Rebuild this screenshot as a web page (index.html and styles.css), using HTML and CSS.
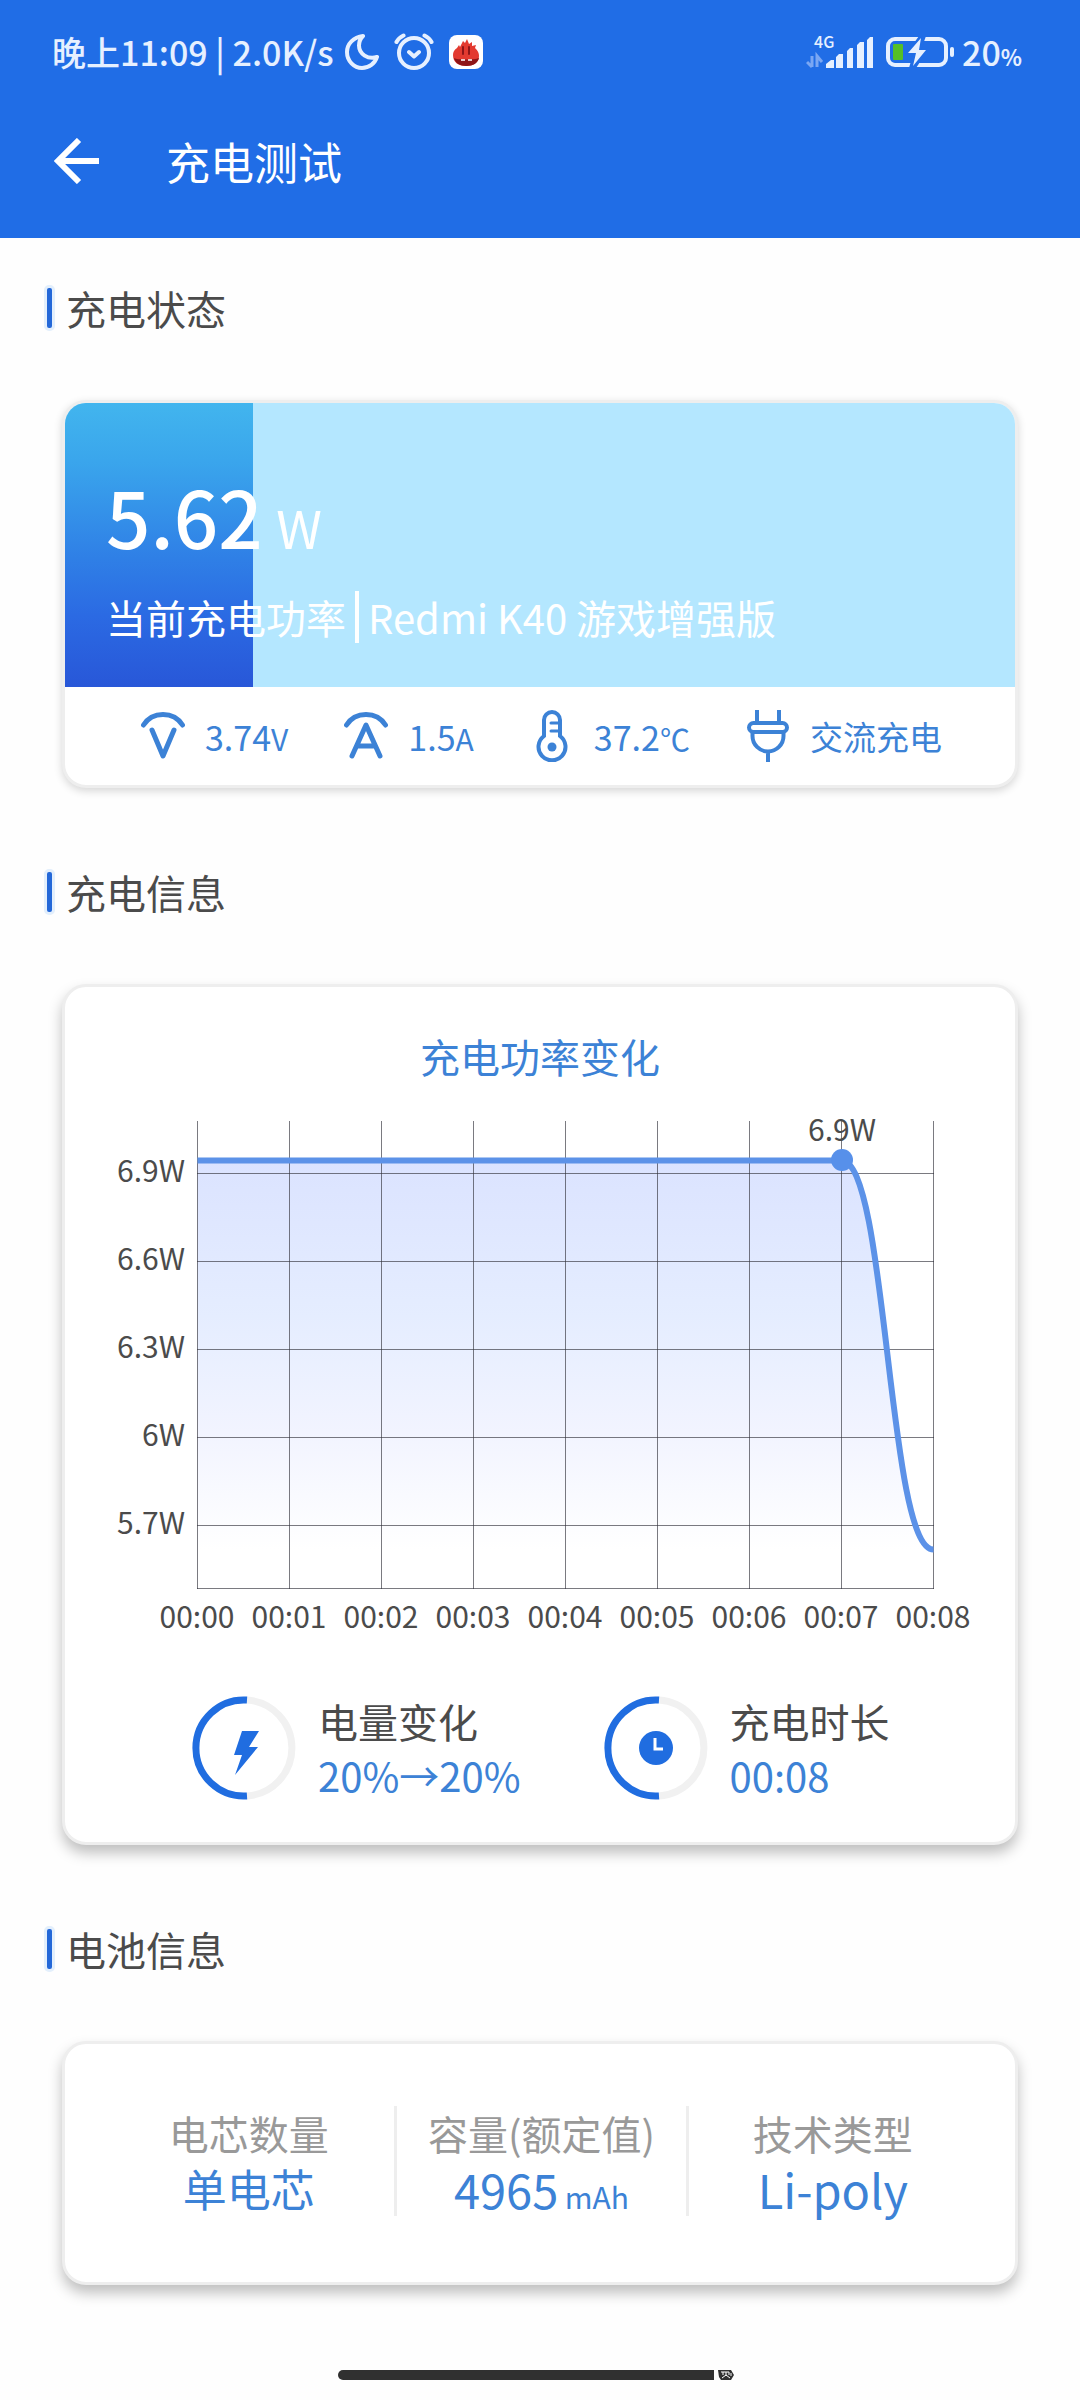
FILE: index.html
```html
<!DOCTYPE html>
<html lang="zh-CN">
<head>
    <meta charset="UTF-8">
    <meta name="viewport" content="width=device-width, initial-scale=1.0">
    <title>充电测试</title>
    <link rel="stylesheet" href="styles.css">
</head>
<body>
    <header class="app-header">
        <div class="status-bar">
            <div class="status-left">
                <span>晚上11:09 | 2.0K/s</span>
                <svg class="moon-icon" width="34" height="36" viewBox="0 0 34 36" fill="none" stroke="#e6f0ff" stroke-width="4" stroke-linejoin="round">
                    <path d="M18 2C8.500 3 2 10 2 18c0 9 7 16 15 16 7 0 13-4.500 15-11-9 3-18-3-18-11.500 0-3.500 1.500-7 4-9.500z"/>
                </svg>
                <svg class="alarm-icon" width="40" height="38" viewBox="0 0 40 38" fill="none" stroke="#e6f0ff" stroke-width="4" stroke-linecap="round" stroke-linejoin="round">
                    <circle cx="20" cy="20" r="15"/>
                    <path d="M2.500 9c1.500-3 4-5 7-6.500M37.500 9c-1.500-3-4-5-7-6.500M15 19l5 4.500 5-4.500"/>
                </svg>
                <svg width="34" height="34" viewBox="0 0 34 34">
                    <rect width="34" height="34" rx="8" fill="#fff"/>
                    <path d="M8 13l2-3 1 2 3-6 2 2 2-4 2 5 3-2 0 4 4-1-1 3c3 3 4 5 4 8 0 6-5 10-13 10S4 27 4 20c0-3 1-5 4-7z" fill="#e33a30"/>
                    <path d="M5 23c3 2 21 2 25 0-1 5-6 8-12.500 8S6 28 5 23z" fill="#8d1518"/>
                    <path d="M14 12v7M20 12v7" stroke="#8d1518" stroke-width="2" stroke-linecap="round"/>
                    <path d="M12 25h4M19 25h4" stroke="#fff" stroke-width="1.500"/>
                </svg>
            </div>
            <div class="status-right">
                <div class="signal">
                    <span class="network">4G</span>
                    <svg width="68" height="34" viewBox="0 0 68 34" fill="#e6f0ff">
                        <path d="M6 21v11M1 27l5 5M11 32V21l5 6" fill="none" stroke="#7aa7f3" stroke-width="3"/>
                        <path d="M20 33v-4l5-4h3v8zM30 33V22l3-3h4v14zM41 33V16l3-3h3v20zM51 33V10l3-3h4v26zM61 33V5l3-3h3v31z"/>
                    </svg>
                </div>
                <svg class="battery-icon" width="68" height="32" viewBox="0 0 68 32">
                    <rect x="2" y="3" width="58" height="26" rx="7" fill="none" stroke="#e6f0ff" stroke-width="4"/>
                    <rect x="7" y="8" width="10" height="16" rx="1" fill="#55bf27"/>
                    <rect x="64" y="11" width="4" height="10" rx="2" fill="#e6f0ff"/>
                    <path d="M33 0L20 18h7l-4 14h7l12-18h-7l5-14z" fill="#206de6"/>
                    <path d="M35 2L22 17h8l-3 13 13-16h-7z" fill="#e6f0ff"/>
                </svg>
                <span>20<small>%</small></span>
            </div>
        </div>
        <nav class="title-bar">
            <button class="back-btn" type="button" aria-label="返回">
                <svg width="46" height="46" viewBox="0 0 46 46" fill="none" stroke="#fff" stroke-width="6">
                    <path d="M25 2L4 23l21 21M4 23h41"/>
                </svg>
            </button>
            <h1>充电测试</h1>
        </nav>
    </header>

    <main>
        <section>
            <h2>充电状态</h2>
            <div class="card power-card">
                <div class="power">
                    <div class="power-value">5.62 <span>W</span></div>
                    <div class="power-info">
                        <span>当前充电功率</span>
                        <span class="device">Redmi K40 游戏增强版</span>
                    </div>
                </div>
                <ul class="metrics">
                    <li>
                        <svg width="44" height="52" viewBox="0 0 44 52" fill="none" stroke="#3c82d6" stroke-width="5" stroke-linecap="round" stroke-linejoin="round">
                            <path d="M2.500 15C7 8 14 4.500 22 4.500S37 8 41.500 15M11 20l11 26 11-26"/>
                        </svg>
                        <span>3.74<small>V</small></span>
                    </li>
                    <li>
                        <svg width="44" height="52" viewBox="0 0 44 52" fill="none" stroke="#3c82d6" stroke-width="5" stroke-linecap="round" stroke-linejoin="round">
                            <path d="M2.500 15C7 8 14 4.500 22 4.500S37 8 41.500 15M8 46l14-31 14 31M14 36h16"/>
                        </svg>
                        <span>1.5<small>A</small></span>
                    </li>
                    <li>
                        <svg width="44" height="52" viewBox="0 0 44 52" fill="none" stroke="#3c82d6" stroke-width="4" stroke-linecap="round">
                            <path d="M14 26V10a8 8 0 0 1 16 0v16a13.500 13.500 0 1 1-16 0z"/>
                            <path d="M21 13h8M21 21h8" stroke-width="3"/>
                            <circle cx="22" cy="37" r="4.500" fill="#3c82d6" stroke="none"/>
                        </svg>
                        <span>37.2<small>℃</small></span>
                    </li>
                    <li>
                        <svg width="44" height="52" viewBox="0 0 44 52" fill="none" stroke="#3c82d6" stroke-width="4">
                            <path d="M11 0v12M33 0v12M6.500 23v3a15.500 15.500 0 0 0 31 0v-3M22 41v11"/>
                            <rect x="3" y="13" width="38" height="9" rx="4.500"/>
                        </svg>
                        <span class="charge-type">交流充电</span>
                    </li>
                </ul>
            </div>
        </section>

        <section>
            <h2>充电信息</h2>
            <div class="card chart-card">
                <h3>充电功率变化</h3>
                <svg class="chart" viewBox="0 0 950 560" role="img" aria-label="充电功率变化">
                    <defs>
                        <linearGradient id="area" x1="0" y1="0" x2="0" y2="1">
                            <stop offset="0" stop-color="#dbe3ff"/>
                            <stop offset="0.4" stop-color="#e5edff"/>
                            <stop offset="0.7" stop-color="#f2f4ff"/>
                            <stop offset="1" stop-color="#fff"/>
                        </linearGradient>
                    </defs>
                    <path d="M132.500 74.500H776.500C822.500 74.500 822.500 463.500 868.500 463.500H132.500z" fill="url(#area)"/>
                    <path class="grid" d="M132.500 35V503M224.500 35V503M316.500 35V503M408.500 35V503M500.500 35V503M592.500 35V503M684.500 35V503M776.500 35V503M868.500 35V503M132 87.500H869M132 175.500H869M132 263.500H869M132 351.500H869M132 439.500H869M132 502.500H869"/>
                    <path class="line" d="M132.500 74.500H776.500C822.500 74.500 822.500 463.500 868.500 463.500"/>
                    <circle cx="777" cy="74" r="11" fill="#5790ea"/>
                    <text class="axis-x" x="777" y="55">6.9W</text>
                    <g class="axis-y">
                        <text x="120" y="96">6.9W</text>
                        <text x="120" y="184">6.6W</text>
                        <text x="120" y="272">6.3W</text>
                        <text x="120" y="360">6W</text>
                        <text x="120" y="448">5.7W</text>
                    </g>
                    <g class="axis-x">
                        <text x="132" y="542">00:00</text>
                        <text x="224" y="542">00:01</text>
                        <text x="316" y="542">00:02</text>
                        <text x="408" y="542">00:03</text>
                        <text x="500" y="542">00:04</text>
                        <text x="592" y="542">00:05</text>
                        <text x="684" y="542">00:06</text>
                        <text x="776" y="542">00:07</text>
                        <text x="868" y="542">00:08</text>
                    </g>
                </svg>
                <div class="stats">
                    <div class="stat">
                        <svg width="104" height="104" viewBox="0 0 104 104">
                            <path d="M55 4.100A48 48 0 0 1 55 99.900" fill="none" stroke="#f1f1f1" stroke-width="7"/>
                            <path d="M55 4.100A48 48 0 1 0 55 99.900" fill="none" stroke="#206de0" stroke-width="7"/>
                            <path d="M50 35h17L57 51h9L43 79l7-20h-8z" fill="#206de0"/>
                        </svg>
                        <div>
                            <div class="stat-label">电量变化</div>
                            <div class="stat-value">20%→20%</div>
                        </div>
                    </div>
                    <div class="stat">
                        <svg width="104" height="104" viewBox="0 0 104 104">
                            <path d="M55 4.100A48 48 0 0 1 55 99.900" fill="none" stroke="#f1f1f1" stroke-width="7"/>
                            <path d="M55 4.100A48 48 0 1 0 55 99.900" fill="none" stroke="#206de0" stroke-width="7"/>
                            <circle cx="52" cy="52" r="17" fill="#206de0"/>
                            <path d="M51 42v11h8" fill="none" stroke="#fff" stroke-width="3"/>
                        </svg>
                        <div>
                            <div class="stat-label">充电时长</div>
                            <div class="stat-value">00:08</div>
                        </div>
                    </div>
                </div>
            </div>
        </section>

        <section>
            <h2>电池信息</h2>
            <dl class="card battery-card">
                <div>
                    <dt>电芯数量</dt>
                    <dd>单电芯</dd>
                </div>
                <div>
                    <dt>容量(额定值)</dt>
                    <dd class="latin">4965 <small>mAh</small></dd>
                </div>
                <div>
                    <dt>技术类型</dt>
                    <dd class="latin">Li-poly</dd>
                </div>
            </dl>
        </section>
    </main>

    <div class="home-bar">
        <span class="home-line"></span>
        <svg width="16" height="10" viewBox="0 0 16 10">
            <path d="M0 0h13l3 5-3 5H3L1 7z" fill="#303030"/>
            <path d="M3 2h8M5 2v3M8 2v4M11 2v3M4 8l4-3 4 3M13 3v3" fill="none" stroke="#fff"/>
        </svg>
    </div>
</body>
</html>
```

FILE: styles.css
```css
:root {
    --header-blue: #206de6;
    --text-blue: #3c82d6;
    --text-dark: #4b4b4b;
    --text-gray: #999;
    --border: #eee;
}

* {
    margin: 0;
    padding: 0;
    box-sizing: border-box;
}

body {
    font-family: "Noto Sans CJK SC", sans-serif;
    background: #fefefe;
    color: var(--text-dark);
}

svg {
    display: block;
    flex-shrink: 0;
}

/* header */
.app-header {
    background: var(--header-blue);
    color: #fff;
    padding-bottom: 36px;
}

.status-bar {
    display: flex;
    justify-content: space-between;
    align-items: center;
    height: 104px;
    padding: 0 58px 0 52px;
    font-size: 34px;
    font-weight: 500;
    line-height: 50px;
    color: #e6f0ff;
}

.status-left,
.status-right {
    display: flex;
    align-items: center;
}

.moon-icon {
    margin-left: 11px;
}

.alarm-icon {
    margin: 0 15px;
}

.signal {
    position: relative;
}

.network {
    position: absolute;
    top: -2px;
    left: 8px;
    font-size: 16px;
    line-height: 16px;
}

.battery-icon {
    margin: 0 8px 0 12px;
}

.status-bar small {
    font-size: 22px;
    font-weight: 700;
    line-height: 1;
}

.title-bar {
    display: flex;
    align-items: center;
    height: 98px;
    padding: 16px 54px 0;
}

.title-bar h1 {
    margin-left: 66px;
    font-size: 44px;
    font-weight: 400;
    line-height: 64px;
}

.back-btn {
    background: none;
    border: none;
    cursor: pointer;
}

/* sections */
main {
    padding: 40px 62px 0;
}

section {
    margin-bottom: 74px;
}

h2 {
    display: flex;
    align-items: center;
    margin: 0 0 62px -18px;
    font-size: 40px;
    font-weight: 400;
    line-height: 60px;
}

h2::before {
    content: "";
    width: 5px;
    height: 40px;
    margin-right: 11px;
    border: 3px solid #e3effc;
    border-radius: 5px;
    background: #2468d8;
}

.card {
    background: #fff;
    border: 3px solid var(--border);
    border-radius: 24px;
    box-shadow: 0 8px 14px rgba(0, 0, 0, 0.25);
}

/* charging power */
.power-card {
    overflow: hidden;
    box-shadow: 0 3px 8px rgba(0, 0, 0, 0.16);
}

.power {
    height: 284px;
    padding: 62px 41px 0;
    color: #fff;
    background: linear-gradient(#42b5ee, #3aa6ec 20%, #2f7fe6 55%, #2b6ae3 75%, #2857d8) no-repeat #b4e7ff;
    background-size: 19.8% 100%;
}

.power-value {
    font-size: 78px;
    font-weight: 500;
    line-height: 100px;
    white-space: nowrap;
}

.power-value span {
    margin-left: -4px;
    font-size: 52px;
    font-weight: 400;
    line-height: 1;
}

.power-info {
    display: flex;
    align-items: center;
    margin-top: 22px;
    font-size: 40px;
    line-height: 60px;
    white-space: nowrap;
}

.device {
    margin-left: 9px;
    padding-left: 9px;
    line-height: 52px;
    border-left: 4px solid #fff;
}

.metrics {
    display: flex;
    justify-content: space-between;
    align-items: center;
    height: 98px;
    padding: 0 73px 0 76px;
    list-style: none;
    color: var(--text-blue);
    font-size: 34px;
}

.metrics li {
    display: flex;
    align-items: center;
    gap: 20px;
    white-space: nowrap;
}

.metrics small {
    font-size: 30px;
}

.charge-type {
    font-size: 33px;
}

/* chart */
.chart-card {
    padding: 39px 0 40px;
}

.chart-card h3 {
    font-size: 40px;
    font-weight: 400;
    line-height: 60px;
    text-align: center;
    color: var(--text-blue);
}

.chart {
    width: 100%;
    font-size: 30px;
    fill: var(--text-dark);
}

.grid {
    fill: none;
    stroke: rgba(50, 50, 60, 0.65);
    stroke-width: 1;
}

.line {
    fill: none;
    stroke: #5c92e8;
    stroke-width: 6;
}

.axis-x {
    text-anchor: middle;
}

.axis-y {
    text-anchor: end;
}

.stats {
    display: grid;
    grid-template-columns: 1fr 1fr;
    margin-top: 48px;
    padding-left: 127px;
}

.stat {
    display: flex;
    align-items: center;
    gap: 22px;
}

.stat-label,
.stat-value {
    font-size: 40px;
    line-height: 54px;
}

.stat-value {
    color: var(--text-blue);
}

/* battery */
.battery-card {
    display: grid;
    grid-template-columns: repeat(3, 1fr);
    padding: 62px 38px 66px;
    text-align: center;
}

.battery-card div + div {
    border-left: 3px solid var(--border);
}

.battery-card dt,
.battery-card dd {
    line-height: 55px;
    white-space: nowrap;
}

.battery-card dt {
    font-size: 40px;
    color: var(--text-gray);
}

.battery-card dd {
    font-size: 44px;
    color: var(--text-blue);
}

.battery-card .latin {
    font-size: 47px;
}

.battery-card small {
    margin-left: -4px;
    font-size: 30px;
    line-height: 1;
}

.home-bar {
    display: flex;
    justify-content: center;
    gap: 4px;
    padding: 11px 8px 20px 0;
}

.home-line {
    width: 35%;
    height: 10px;
    background: #303030;
    border-radius: 5px 0 0 5px;
}
```
